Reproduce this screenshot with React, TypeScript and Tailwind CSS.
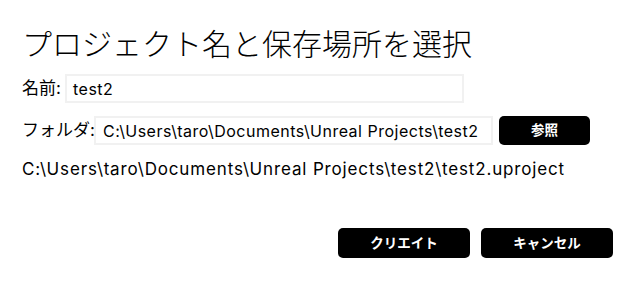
export default function App() {
  return (
    <div className="w-[626px] h-[283px] bg-white text-black font-['Inter','Noto_Sans_CJK_JP',sans-serif] flex flex-col pl-[22px] pr-[13px]">
      {/* タイトル */}
      <h1 className="mt-[22px] text-[30px] leading-[40px] font-light font-['Noto_Sans_CJK_JP',sans-serif]">
        プロジェクト名と保存場所を選択
      </h1>

      {/* 名前 */}
      <div className="mt-[12px] flex items-center">
        <span className="w-[43px] text-[17px] leading-none whitespace-nowrap">名前:</span>
        <div className="w-[399px] h-[29px] border-2 border-[#f1f1f1] px-[6px] flex items-center text-[16px] tracking-[0.5px]">
          test2
        </div>
      </div>

      {/* フォルダ */}
      <div className="mt-[13px] flex items-center">
        <span className="w-[72px] text-[17px] leading-none whitespace-nowrap">フォルダ:</span>
        <div className="w-[399px] h-[29px] border-2 border-[#f1f1f1] px-[7px] flex items-center text-[16px] tracking-[0.5px] whitespace-nowrap overflow-hidden">
          C:\Users\taro\Documents\Unreal Projects\test2
        </div>
        <button className="ml-[6px] w-[91px] h-[29px] rounded-[5px] bg-black text-white text-[13.5px] font-bold">
          参照
        </button>
      </div>

      {/* 保存先パス */}
      <p className="mt-[12px] text-[17px] leading-[24px] tracking-[0.85px]">
        C:\Users\taro\Documents\Unreal Projects\test2\test2.uproject
      </p>

      {/* ボタン */}
      <div className="mt-[47px] flex justify-end gap-[11px]">
        <button className="w-[132px] h-[30px] rounded-[5px] bg-black text-white text-[13.5px] font-bold">
          クリエイト
        </button>
        <button className="w-[132px] h-[30px] rounded-[5px] bg-black text-white text-[13.5px] font-bold">
          キャンセル
        </button>
      </div>
    </div>
  );
}
